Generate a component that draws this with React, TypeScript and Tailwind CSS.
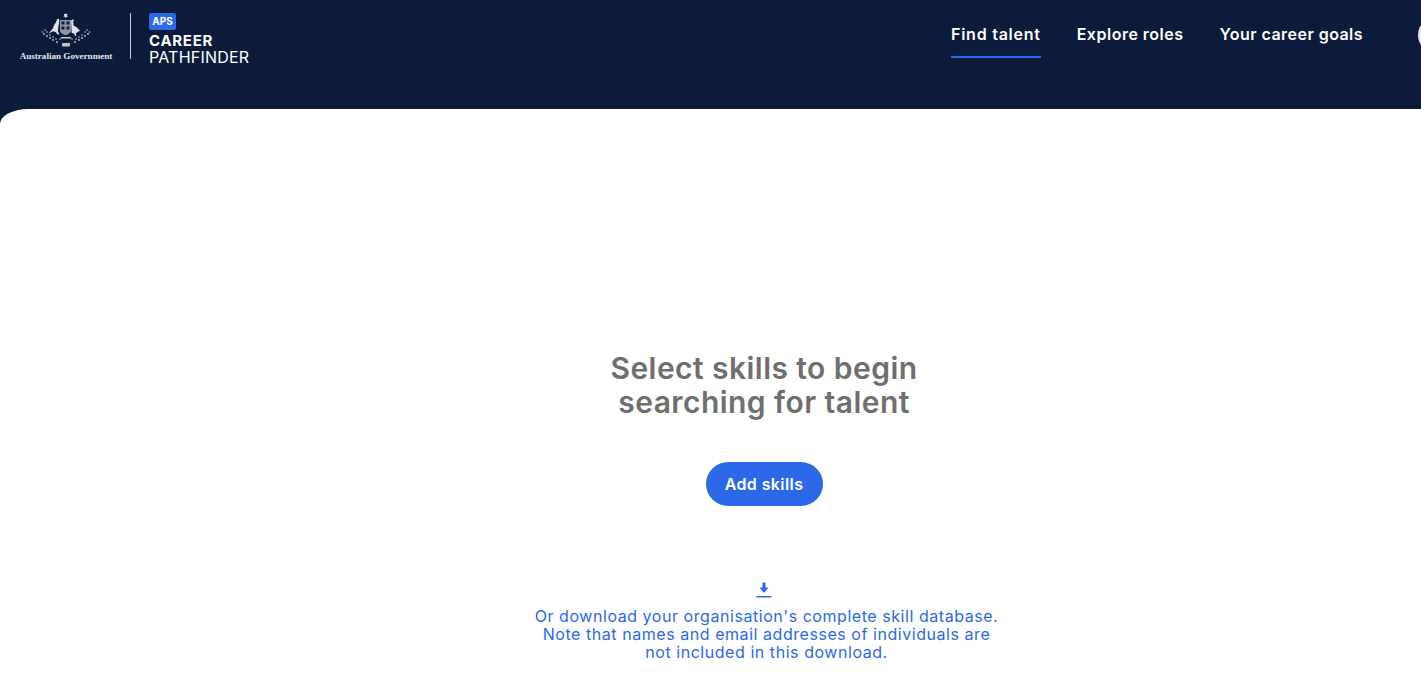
import React from "react";

const font = "font-['Inter',sans-serif]";

function Crest() {
  return (
    <svg width="50" height="36" viewBox="0 0 50 36" className="text-[#dfe2e7]">
      <g fill="currentColor">
        {/* star */}
        <path d="M24 .5l.8 1.600 1.700-.4-.6 1.600 1.300 1.100-1.700.3-.8 1.600-.8-1.600-1.700-.3 1.200-1.100-.5-1.600 1.600.4z" />
        {/* kangaroo */}
        <path d="M17.500 6.500l-1.200.5-1.200 3-2 3-1.300 3.500-4.300 5 4.500-2.300 2.500.8 2.300 2.500 1.700-.3-1.500-2.700.2-3.500.8-4.500.2-3.500z" />
        {/* emu */}
        <path d="M30 8.500l1.800-1 1.700.6-1.300 1 .3 4.400 2.700 1.500 3.800 3.500-2.200 1.500-2 1.500.5 2.400-1.600-.1-.5-2.300-2.500-.6z" />
      </g>
      {/* shield */}
      <path d="M19 8h11v10.500c0 2.500-3 3.800-5.500 4.700-2.500-.9-5.500-2.200-5.500-4.700z" fill="#8f95a3" />
      <g fill="#0b1b39">
        <rect x="20.500" y="9.500" width="3" height="3" />
        <rect x="25.500" y="9.500" width="3" height="3" />
        <rect x="20.500" y="14.500" width="3" height="3" />
        <rect x="25.500" y="14.500" width="3" height="3" />
      </g>
      {/* wattle sprays */}
      <g fill="#c3c7cf">
        <circle cx="1.500" cy="20" r=".8" /><circle cx="4" cy="18" r=".8" /><circle cx="3" cy="22" r=".9" />
        <circle cx="6" cy="20" r=".8" /><circle cx="6" cy="24" r=".9" /><circle cx="9" cy="23" r=".8" />
        <circle cx="9" cy="26" r=".9" /><circle cx="12" cy="25" r=".8" /><circle cx="12" cy="28" r=".9" />
        <circle cx="15" cy="27" r=".8" /><circle cx="16" cy="30" r=".9" /><circle cx="19" cy="27" r=".8" />
        <circle cx="48.500" cy="20" r=".8" /><circle cx="46" cy="18" r=".8" /><circle cx="47" cy="22" r=".9" />
        <circle cx="44" cy="20" r=".8" /><circle cx="44" cy="24" r=".9" /><circle cx="41" cy="23" r=".8" />
        <circle cx="41" cy="26" r=".9" /><circle cx="38" cy="25" r=".8" /><circle cx="38" cy="28" r=".9" />
        <circle cx="35" cy="27" r=".8" /><circle cx="34" cy="30" r=".9" /><circle cx="31" cy="27" r=".8" />
        <rect x="20" y="25" width="10" height="1.500" />
        <rect x="21" y="31" width="8" height="3.500" rx="1" />
      </g>
    </svg>
  );
}

function NavLink({ label, active, className }: { label: string; active?: boolean; className: string }) {
  return (
    <a
      href="#"
      className={`h-[38px] pt-[2px] text-[16px] leading-[24px] font-semibold text-white border-b-2 ${className} ${
        active ? "border-[#2a6ae9]" : "border-transparent"
      }`}
    >
      {label}
    </a>
  );
}

export default function App() {
  return (
    <div className={`h-[682px] overflow-hidden bg-[#0b1b39] ${font}`}>
      <header className="h-[109px] flex items-start justify-between">
        <div className="flex items-start pl-[19px] pt-[12px]">
          <div className="w-[94px] flex flex-col items-center">
            <Crest />
            <span className="mt-[3px] font-['Liberation_Serif',serif] font-bold text-[9.100px] leading-[11px] text-[#e4e6ea] whitespace-nowrap">
              Australian Government
            </span>
          </div>
          <div className="ml-[17px] mt-[1px] w-px h-[46px] bg-[#c9ccd3]" />
          <div className="ml-[18px] mt-[1px] flex flex-col items-start">
            <span className="w-[27px] h-[17px] rounded-[2px] bg-[#2a6ae9] text-white text-[10px] leading-[17px] font-bold text-center">
              APS
            </span>
            <span className="mt-[3px] text-[15px] leading-[16px] font-bold tracking-[0.7px] text-white">
              CAREER
            </span>
            <span className="text-[16px] leading-[16px] font-normal tracking-[0.2px] text-white">
              PATHFINDER
            </span>
          </div>
        </div>
        <div className="flex items-start pt-[20px]">
          <nav className="flex gap-[36px]">
            <NavLink label="Find talent" active className="tracking-[0.75px]" />
            <NavLink label="Explore roles" className="tracking-[0.5px]" />
            <NavLink label="Your career goals" className="tracking-[0.45px]" />
          </nav>
          <div className="ml-[55px] mr-[-33px] mt-[-3px] w-[36px] h-[36px] rounded-full bg-[#e8e8e8]" />
        </div>
      </header>
      <main className="h-[573px] bg-white rounded-tl-[28px_15px] flex flex-col items-center pl-[107px] pt-[242px]">
        <h1 className="text-[30px] leading-[34px] font-semibold text-[#706f6f] text-center tracking-[0.45px]">
          Select skills to begin
          <br />
          searching for talent
        </h1>
        <button className="mt-[43px] w-[117px] h-[44px] rounded-full bg-[#2a6ae9] text-white text-[16px] font-semibold tracking-[0.4px]">
          Add skills
        </button>
        <a href="#" className="mt-[76px] flex flex-col items-center text-[#2a6ae9]">
          <svg width="16" height="16" viewBox="0 0 16 16" fill="currentColor">
            <path d="M6.500 .5h3v5h3L8 11 3.500 5.500h3z" />
            <rect x=".5" y="14" width="15" height="1.500" />
          </svg>
          <span className="mt-[9px] pl-[5px] text-[16px] leading-[18px] text-center tracking-[0.55px]">
            Or download your organisation's complete skill database.
            <br />
            Note that names and email addresses of individuals are
            <br />
            not included in this download.
          </span>
        </a>
      </main>
    </div>
  );
}
